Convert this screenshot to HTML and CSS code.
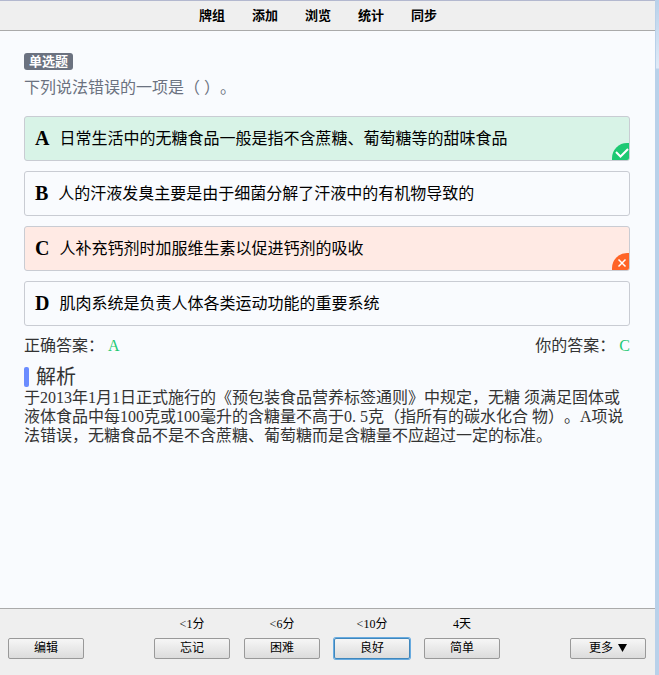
FILE: index.html
```html
<!DOCTYPE html>
<html lang="zh-CN">
<head>
  <meta charset="UTF-8">
  <title>单选题</title>
  <link rel="stylesheet" href="styles.css">
</head>
<body>
  <div class="window">
    <nav class="toolbar">
      <a href="#decks">牌组</a>
      <a href="#add">添加</a>
      <a href="#browse">浏览</a>
      <a href="#stats">统计</a>
      <a href="#sync">同步</a>
    </nav>

    <main class="card">
      <span class="type">单选题</span>
      <p class="question">下列说法错误的一项是（ ）。</p>

      <ul class="options">
        <li class="option right">
          <b>A</b><span>日常生活中的无糖食品一般是指不含蔗糖、葡萄糖等的甜味食品</span>
          <svg class="mark" viewBox="0 0 17 17">
            <path d="M0 17V15A15 15 0 0 1 15 0H17V17Z" fill="#1dc973"/>
            <path d="M4 9L8.500 13.500L16 6" fill="none" stroke="#fff" stroke-width="2"/>
          </svg>
        </li>
        <li class="option">
          <b>B</b><span>人的汗液发臭主要是由于细菌分解了汗液中的有机物导致的</span>
        </li>
        <li class="option wrong">
          <b>C</b><span>人补充钙剂时加服维生素以促进钙剂的吸收</span>
          <svg class="mark" viewBox="0 0 17 17">
            <path d="M0 17V15A15 15 0 0 1 15 0H17V17Z" fill="#ff6427"/>
            <path d="M6.500 6.500L13.500 13.500M13.500 6.500L6.500 13.500" fill="none" stroke="#fff" stroke-width="1.500"/>
          </svg>
        </li>
        <li class="option">
          <b>D</b><span>肌肉系统是负责人体各类运动功能的重要系统</span>
        </li>
      </ul>

      <div class="answers">
        <div>正确答案：<span class="key">A</span></div>
        <div>你的答案：<span class="key">C</span></div>
      </div>

      <h2 class="heading">解析</h2>
      <p class="analysis">于2013年1月1日正式施行的《预包装食品营养标签通则》中规定，无糖 须满足固体或液体食品中每100克或100毫升的含糖量不高于0. 5克（指所有的碳水化合 物）。A项说法错误，无糖食品不是不含蔗糖、葡萄糖而是含糖量不应超过一定的标准。</p>
    </main>

    <footer class="bottom">
      <button>编辑</button>
      <div class="ease">
        <div class="choice"><label for="again">&lt;1分</label><button id="again">忘记</button></div>
        <div class="choice"><label for="hard">&lt;6分</label><button id="hard">困难</button></div>
        <div class="choice"><label for="good">&lt;10分</label><button id="good" class="default">良好</button></div>
        <div class="choice"><label for="easy">4天</label><button id="easy">简单</button></div>
      </div>
      <button class="more">更多<svg class="arrow" viewBox="0 0 9 8"><path d="M0 0H9L4.500 8Z"/></svg></button>
    </footer>
  </div>
  <div class="edge"></div>
</body>
</html>
```

FILE: styles.css
```css
* {
  box-sizing: border-box;
}

body {
  margin: 0;
  min-height: 100vh;
  display: flex;
  background: #f9fbfe;
  color: #333;
  font-family: "Liberation Serif", "Noto Sans CJK SC", serif;
  font-size: 16px;
  text-spacing-trim: space-all;
}

.window {
  flex: 1;
  display: flex;
  flex-direction: column;
  border-top: 1px solid #b3b8cf;
}

/* window frame on the right */
.edge {
  width: 4px;
  border-left: 1px solid #b9d1ea;
  background: linear-gradient(#b9d1ea, #dfeaf7 68px, #b9d1ea 69px);
}

.toolbar {
  display: flex;
  justify-content: center;
  gap: 27px;
  padding-right: 19px;
  height: 30px;
  line-height: 30px;
  background: #efefef;
  border-bottom: 1px solid #aaa;
}
.toolbar a {
  color: #000;
  font-size: 13px;
  font-weight: bold;
  text-decoration: none;
}

.card {
  flex: 1;
  padding: 22px 25px 20px 24px;
}

.type {
  display: block;
  width: fit-content;
  padding: 0 5px;
  border-radius: 3px;
  background: #6b7280;
  color: #fff;
  font-size: 13px;
  font-weight: bold;
  line-height: 17px;
}
.question {
  margin: 7px 0 17px;
  color: #6b7280;
  line-height: 22px;
}

.options {
  display: flex;
  flex-direction: column;
  gap: 10px;
  margin: 0;
  padding: 0;
  list-style: none;
}
.option {
  position: relative;
  display: flex;
  align-items: center;
  gap: 10px;
  padding: 10px;
  border: 1px solid #c9ccd3;
  border-radius: 3px;
  color: #000;
  line-height: 23px;
}
.option b {
  font-size: 20px;
}
.right {
  background: #d8f3e7;
}
.wrong {
  background: #ffeae4;
}
.mark {
  position: absolute;
  right: 0;
  bottom: 0;
  width: 17px;
  height: 17px;
  border-bottom-right-radius: 2px;
}

.answers {
  display: flex;
  justify-content: space-between;
  margin: 8px 0 10px;
  line-height: 23px;
}
.key {
  margin-left: 4px;
  color: #1dc973;
}

.heading {
  display: flex;
  align-items: center;
  gap: 7px;
  margin: 0;
  font-size: 20px;
  font-weight: normal;
  line-height: 20px;
}
.heading::before {
  content: "";
  width: 5px;
  height: 20px;
  border-radius: 2px;
  background: #6b8cff;
}
.analysis {
  margin: 1px 0 0;
  line-height: 19px;
}

.bottom {
  display: grid;
  grid-template-columns: 1fr auto 1fr;
  align-items: end;
  padding: 6px 9px 16px 8px;
  background: #efefef;
  border-top: 1px solid #aaa;
  color: #000;
  font-size: 12px;
}
.bottom button {
  width: 76px;
  height: 21px;
  padding: 0;
  border: 1px solid #999;
  border-radius: 2px;
  background: linear-gradient(#f6f6f6, #dcdcdc);
  color: #000;
  font: inherit;
  line-height: 19px;
}
.bottom .default {
  border-color: #3f87bd;
  box-shadow: 0 0 0 1px #68abe0;
}
.ease {
  display: flex;
  gap: 14px;
}
.choice {
  display: flex;
  flex-direction: column;
  gap: 5px;
  line-height: 18px;
  text-align: center;
}
.more {
  justify-self: end;
}
.arrow {
  width: 9px;
  height: 8px;
  margin-left: 5px;
}
```
